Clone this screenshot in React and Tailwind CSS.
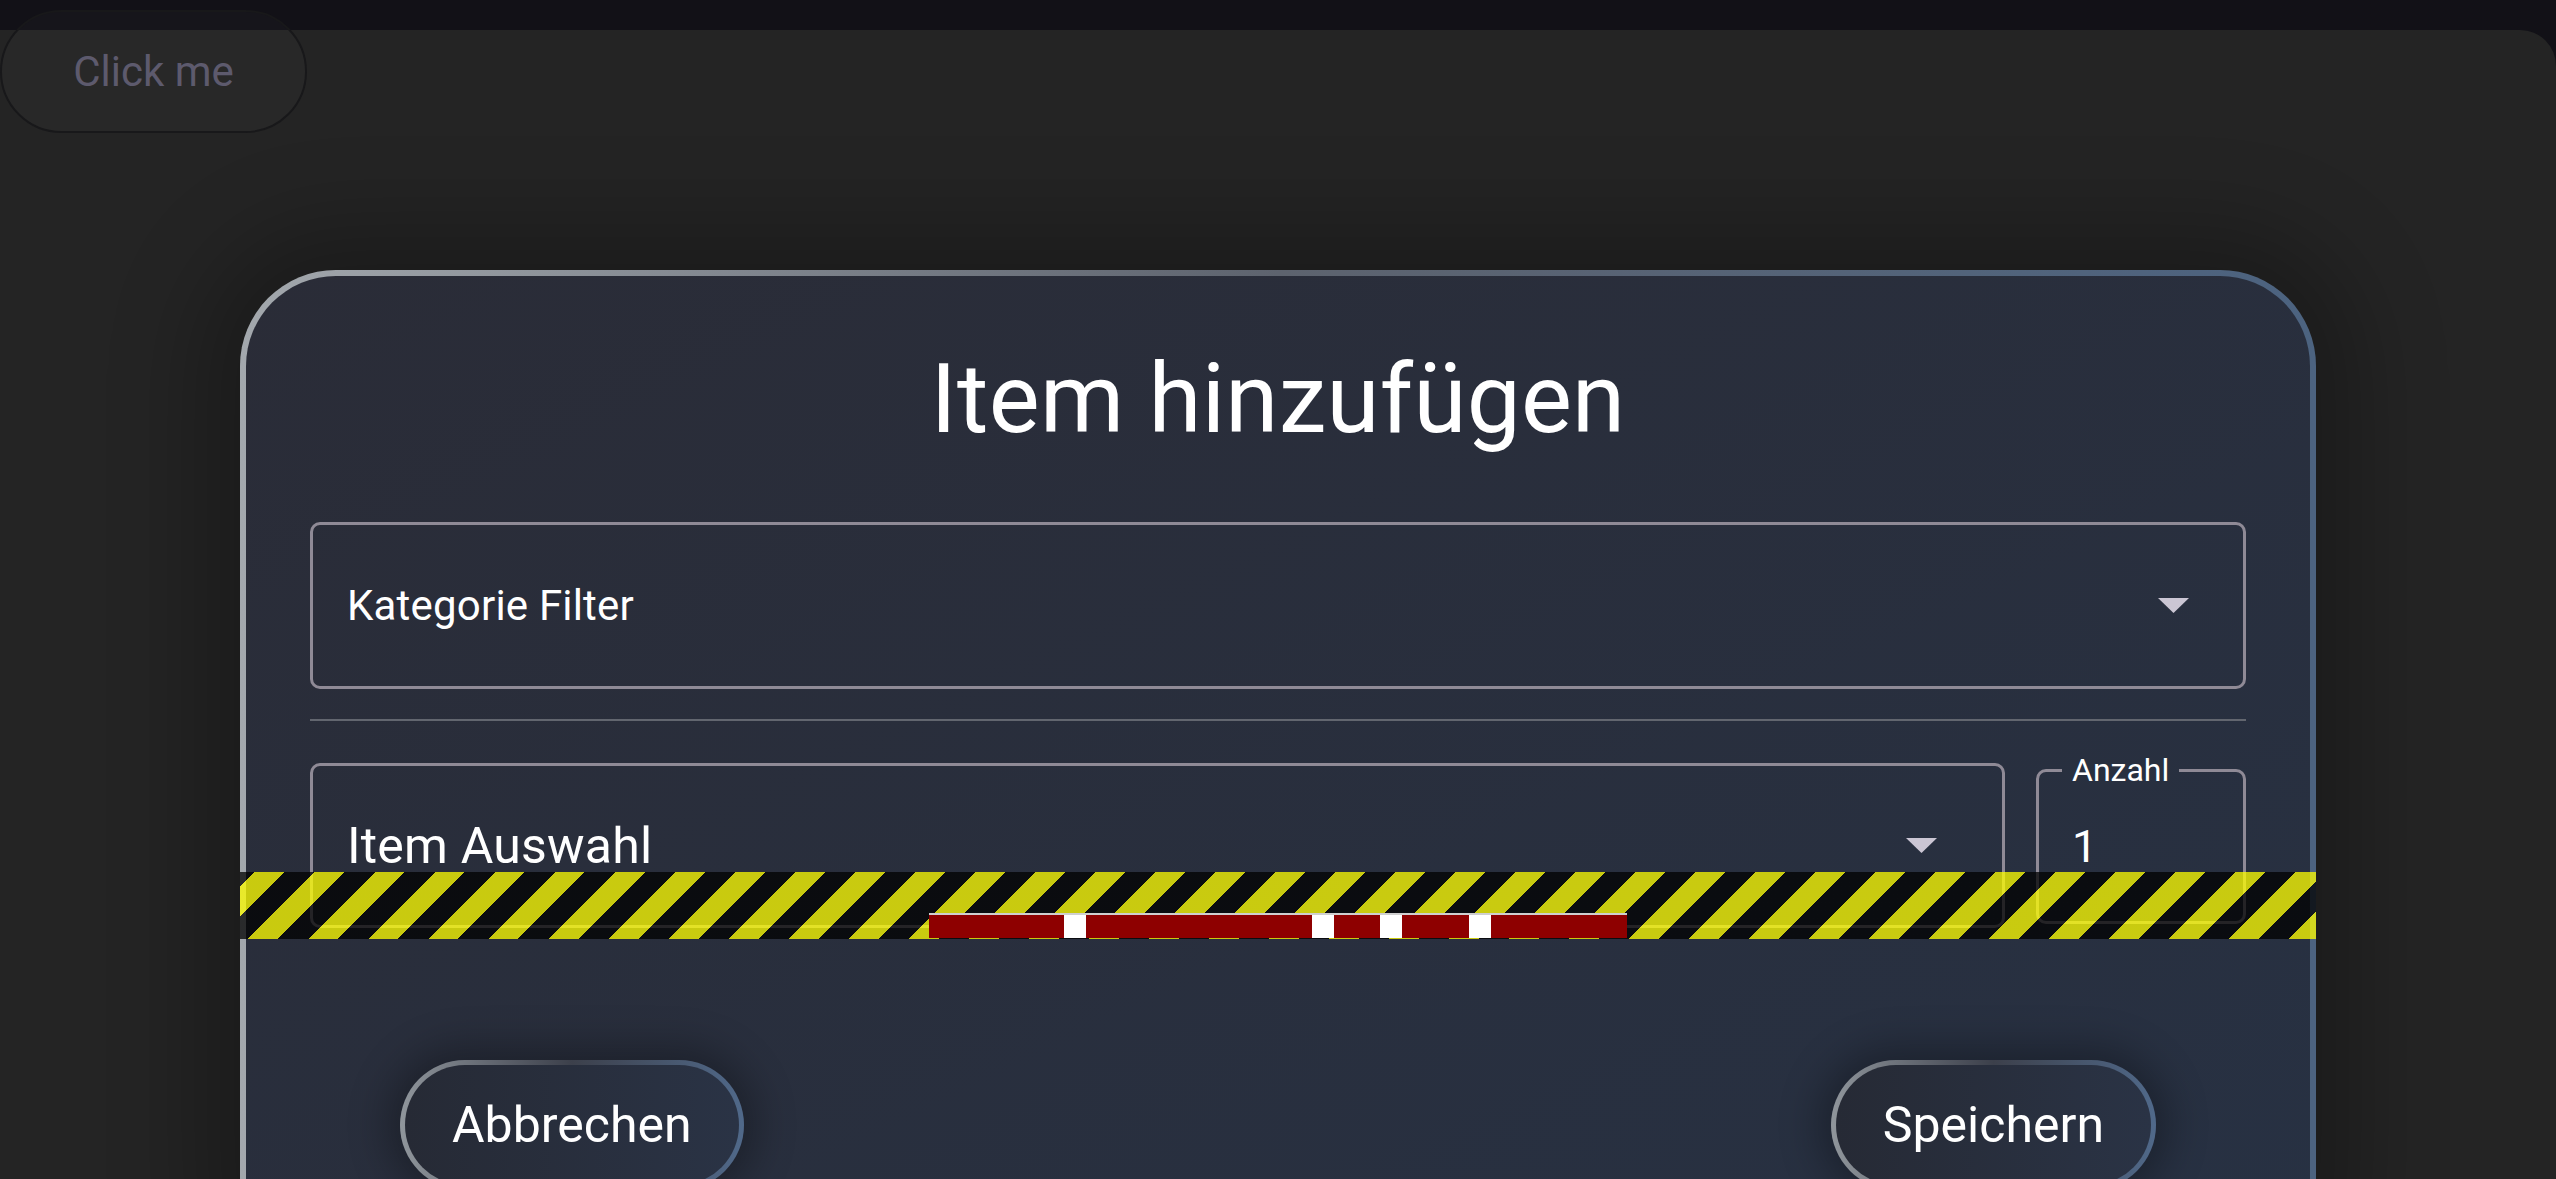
import React from 'react';

function CaretDown({ className = '' }) {
  return (
    <svg className={className} viewBox="0 0 31 15" aria-hidden="true">
      <polygon points="0,0 31,0 15.5,15" fill="#cbc6d4" />
    </svg>
  );
}

function PillButton({ label }) {
  return (
    <div className="rounded-full p-[5px] bg-linear-to-r from-[#90969c] via-[#3c404b] to-[#50698a] shadow-[0_0_40px_12px_rgba(0,0,0,0.3)]">
      <button
        type="button"
        className="flex h-[120px] items-center rounded-full bg-linear-to-r from-[#262a35] to-[#2a3345] px-[47px] text-[50px] leading-none text-white"
      >
        {label}
      </button>
    </div>
  );
}

export default function App() {
  return (
    <div className="relative h-[1179px] w-[2556px] overflow-hidden bg-[#121117] font-['Roboto','Liberation_Sans',sans-serif]">
      {/* Background panel */}
      <div className="mt-[30px] h-[1149px] rounded-tr-[36px] bg-[#242424] pt-[240px]">
        {/* Dialog */}
        <div className="relative mx-auto w-[2076px] rounded-[96px] bg-linear-to-r from-[#a3a8ad] via-[#5d636e] to-[#4c6380] p-[6px] shadow-[0_0_90px_40px_rgba(0,0,0,0.25)]">
          <div className="h-[1000px] rounded-[90px] bg-linear-to-br from-[#2a2c37] to-[#273143] px-[64px] pt-[75px]">
            <h1 className="text-center text-[96px] font-normal leading-none tracking-[0.3px] text-white">Item hinzufügen</h1>

            {/* Kategorie Filter */}
            <div className="mt-[75px] flex h-[167px] items-center justify-between rounded-[10px] border-[3px] border-[#8f8a96] pl-[34px] pr-[54px]">
              <span className="text-[42px] leading-none tracking-[0.2px] text-white">Kategorie Filter</span>
              <CaretDown className="h-[15px] w-[31px]" />
            </div>

            <div className="mt-[30px] h-[2px] bg-[#62666f]" />

            {/* Item + Anzahl */}
            <div className="mt-[33px] flex h-[185px] items-start gap-[31px]">
              <div className="mt-[9px] flex h-[165px] flex-1 items-center justify-between rounded-[10px] border-[3px] border-[#8f8a96] pl-[34px] pr-[65px]">
                <span className="text-[50px] leading-none tracking-[0.2px] text-white">Item Auswahl</span>
                <CaretDown className="h-[15px] w-[31px]" />
              </div>
              <fieldset className="h-[170px] w-[210px] rounded-[10px] border-[3px] border-[#8f8a96]">
                <legend className="ml-[23px] px-[10px] text-[32px] leading-none text-white">Anzahl</legend>
                <div className="pl-[33px] pt-[38px] text-[45px] leading-none text-white">1</div>
              </fieldset>
            </div>

            {/* Actions */}
            <div className="mt-[121px] flex items-start justify-between px-[90px]">
              <PillButton label="Abbrechen" />
              <PillButton label="Speichern" />
            </div>
          </div>

          {/* Overflow indicator */}
          <div className="absolute left-0 right-0 top-[602px] h-[67px] bg-[repeating-linear-gradient(135deg,rgba(0,0,0,0.75)_0px,rgba(0,0,0,0.75)_10.6px,rgba(255,255,0,0.75)_10.6px,rgba(255,255,0,0.75)_31.8px,rgba(0,0,0,0.75)_31.8px,rgba(0,0,0,0.75)_42.43px)]">
            <div className="absolute left-[689px] top-[41px] flex h-[25px] w-[698px] border-t-2 border-[#cfcfcf] bg-[#8e0000]">
              <div className="ml-[135px] h-full w-[22px] bg-white" />
              <div className="ml-[226px] h-full w-[22px] bg-white" />
              <div className="ml-[46px] h-full w-[22px] bg-white" />
              <div className="ml-[67px] h-full w-[22px] bg-white" />
            </div>
          </div>
        </div>
      </div>

      {/* Click me */}
      <button
        type="button"
        className="absolute left-0 top-[10px] flex h-[123px] w-[307px] items-center justify-center rounded-full border-2 border-[#18181a] bg-white/[0.02] text-[42px] leading-none text-[#5d5a6d]"
      >
        Click me
      </button>
    </div>
  );
}
